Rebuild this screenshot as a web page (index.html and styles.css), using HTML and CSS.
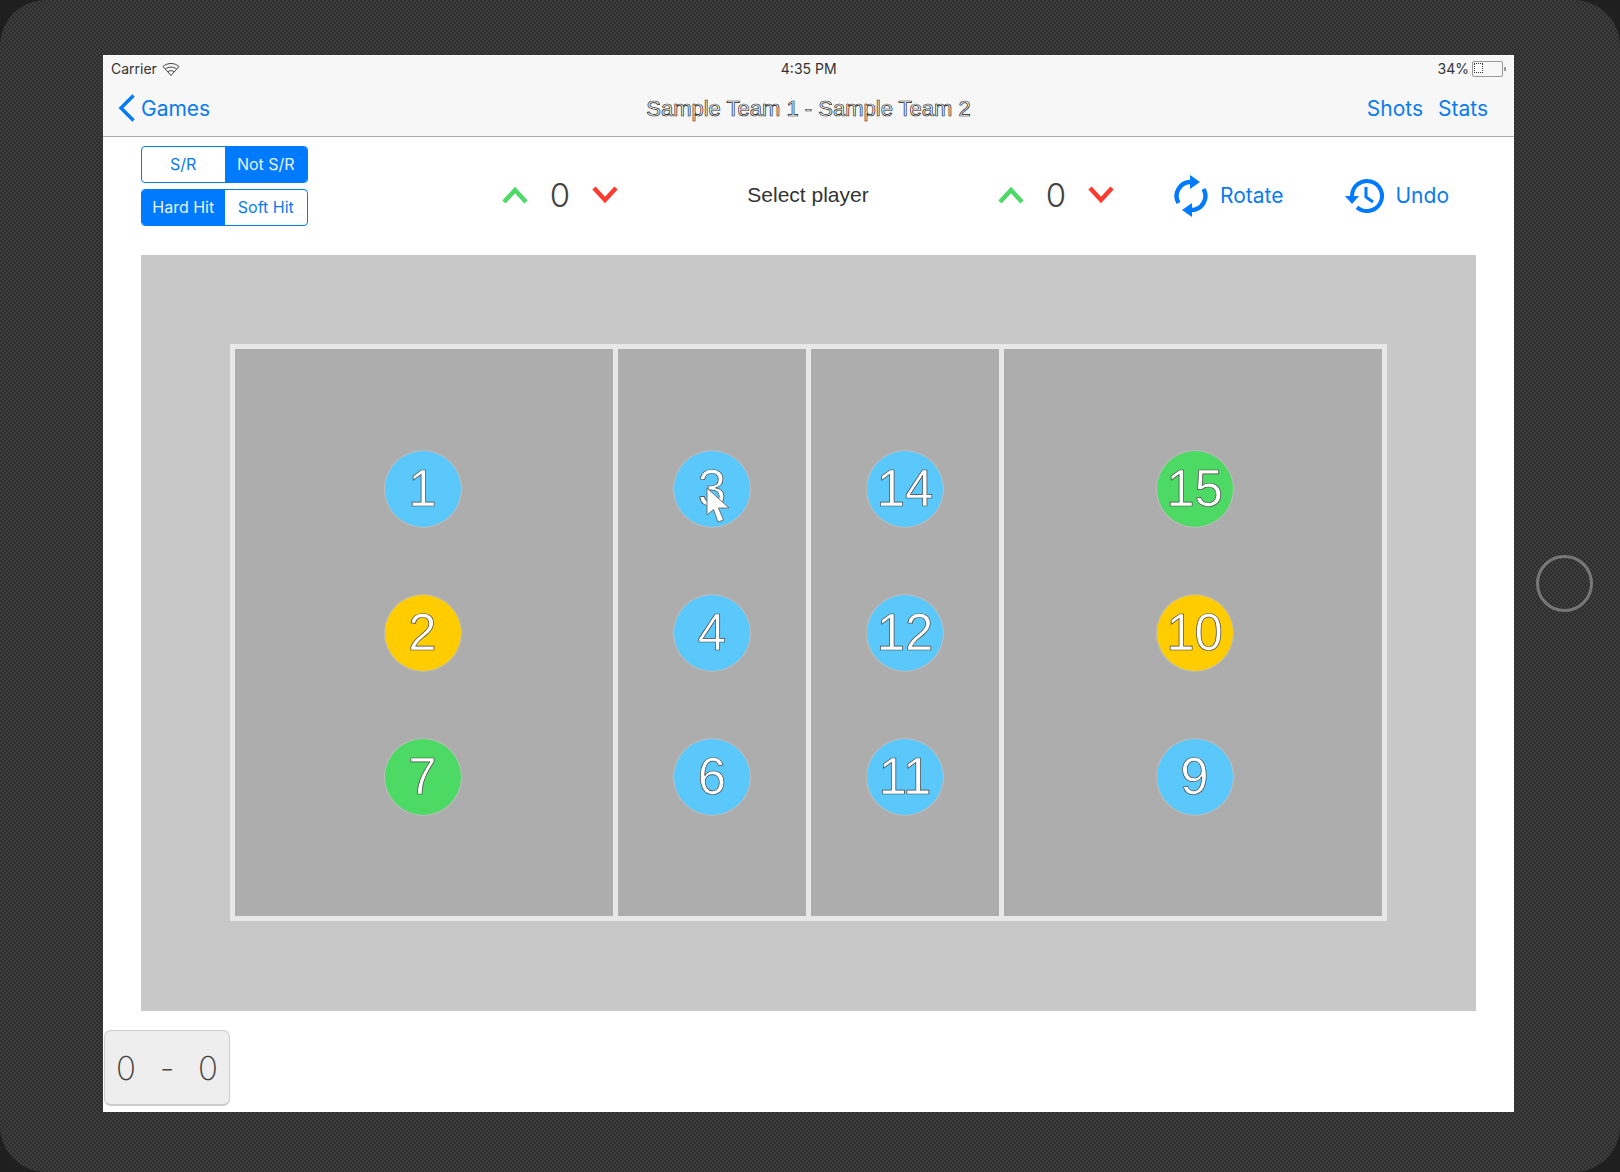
FILE: index.html
```html
<!DOCTYPE html>
<html lang="en">
<head>
    <meta charset="UTF-8">
    <title>Sample Team 1 - Sample Team 2</title>
    <link rel="stylesheet" href="styles.css">
</head>
<body>
    <div class="device">
        <div class="screen">
            <div class="status-bar">
                <div class="status-left">
                    <span>Carrier</span>
                    <svg class="wifi" width="18" height="14" viewBox="0 0 18 14" fill="none" stroke="#444" stroke-width="1">
                        <path d="M1 4.5C5.5 .5 12.5 .5 17 4.5L9 13.5Z"/>
                        <path d="M3.5 7C6.5 4.5 11.5 4.5 14.5 7"/>
                        <path d="M6 9.6C7.8 8.4 10.2 8.4 12 9.6"/>
                    </svg>
                </div>
                <span class="status-time">4:35 PM</span>
                <div class="status-right">
                    <span>34%</span>
                    <div class="battery"><div class="battery-level"></div></div>
                    <div class="battery-tip"></div>
                </div>
            </div>
            <div class="nav-bar">
                <a class="nav-back">
                    <svg width="18" height="28" viewBox="0 0 18 28" fill="none" stroke="#007aff" stroke-width="3.4">
                        <path d="M15.5 1.5L3 14L15.5 26.5"/>
                    </svg>
                    Games
                </a>
                <span class="nav-title">Sample Team 1 - Sample Team 2</span>
                <div class="nav-links">
                    <a>Shots</a>
                    <a>Stats</a>
                </div>
            </div>
            <div class="toolbar">
                <div class="seg-stack">
                    <div class="seg">
                        <div class="seg-item">S/R</div>
                        <div class="seg-item active">Not S/R</div>
                    </div>
                    <div class="seg">
                        <div class="seg-item active">Hard Hit</div>
                        <div class="seg-item">Soft Hit</div>
                    </div>
                </div>
                <div class="adjust adjust-left">
                    <svg width="26" height="18" viewBox="0 0 26 18" fill="none" stroke="#4cd964" stroke-width="4.4"><path d="M2 16L13 4L24 16"/></svg>
                    <span class="adjust-value">0</span>
                    <svg width="26" height="18" viewBox="0 0 26 18" fill="none" stroke="#ff3b30" stroke-width="4.4"><path d="M2 2L13 14L24 2"/></svg>
                </div>
                <div class="select-player">Select player</div>
                <div class="adjust">
                    <svg width="26" height="18" viewBox="0 0 26 18" fill="none" stroke="#4cd964" stroke-width="4.4"><path d="M2 16L13 4L24 16"/></svg>
                    <span class="adjust-value">0</span>
                    <svg width="26" height="18" viewBox="0 0 26 18" fill="none" stroke="#ff3b30" stroke-width="4.4"><path d="M2 2L13 14L24 2"/></svg>
                </div>
                <a class="action action-rotate">
                    <svg width="34" height="44" viewBox="0 0 34 44" fill="none" stroke="#007aff" stroke-width="4.4">
                        <path d="M4.5 29A14 14 0 0 1 17 8"/>
                        <path d="M29.5 15A14 14 0 0 1 17 36"/>
                        <path d="M16 1L26 8L16 15Z" fill="#007aff" stroke="none"/>
                        <path d="M18 43L8 36L18 29Z" fill="#007aff" stroke="none"/>
                    </svg>
                    Rotate
                </a>
                <a class="action action-undo">
                    <svg width="40" height="36" viewBox="0 0 40 36" fill="none" stroke="#007aff" stroke-width="4">
                        <path d="M7 18A15 15 0 1 1 12 29.2"/>
                        <path d="M0 18H14L7 26Z" fill="#007aff" stroke="none"/>
                        <path d="M21 9V19L28 24" stroke-width="3"/>
                    </svg>
                    Undo
                </a>
            </div>
            <div class="floor">
                <div class="court">
                    <div class="zone zone-left">
                        <div class="player blue">1</div>
                        <div class="player yellow">2</div>
                        <div class="player green">7</div>
                    </div>
                    <div class="zone">
                        <div class="player blue">3
                            <svg class="cursor" width="26" height="38" viewBox="0 0 26 38" fill="#fff" stroke="#555" stroke-width=".8">
                                <path d="M1 1V28L7.5 22.5L12 35L17.5 33L12.5 21H23Z"/>
                            </svg>
                        </div>
                        <div class="player blue">4</div>
                        <div class="player blue">6</div>
                    </div>
                    <div class="zone">
                        <div class="player blue">14</div>
                        <div class="player blue">12</div>
                        <div class="player blue">11</div>
                    </div>
                    <div class="zone zone-right">
                        <div class="player green">15</div>
                        <div class="player yellow">10</div>
                        <div class="player blue">9</div>
                    </div>
                </div>
            </div>
            <div class="score-box">
                <span>0</span>
                <span>-</span>
                <span>0</span>
            </div>
        </div>
        <div class="home-col">
            <div class="home-button"></div>
        </div>
    </div>
</body>
</html>
```

FILE: styles.css
```css
body { margin: 0; background: #1f1f1f; font-family: Inter, "Liberation Sans", sans-serif; }
.device { width: 1620px; height: 1172px; box-sizing: border-box; padding: 55px 0 59px 103px; display: flex; border-radius: 46px; background: repeating-conic-gradient(#3d3d3d 0 25%, #2e2e2e 0 50%) 0 0 / 4px 4px; }
.screen { width: 1411px; height: 1057px; background: #fff; overflow: hidden; }
.home-col { flex: 1; display: flex; align-items: center; justify-content: center; padding-right: 6px; padding-bottom: 1px; }
.home-button { width: 51px; height: 51px; border: 3px solid #777; border-radius: 50%; }

/* status bar */
.status-bar { height: 27px; padding: 0 8px; display: flex; align-items: center; justify-content: space-between; position: relative; background: #f7f7f7; font-size: 14px; color: #333; }
.status-left, .status-right { display: flex; align-items: center; gap: 5px; }
.status-right { gap: 3px; }
.status-time { font-size: 14px; color: #333; }
.battery { width: 27px; height: 12px; border: 1px solid #999; border-radius: 2px; padding: 1px; }
.battery-level { width: 7px; height: 8px; background: #fff; border: 1px dotted #333; }
.battery-tip { width: 2px; height: 4px; margin-left: -2px; background: #999; }

/* nav */
.nav-bar { height: 52px; padding: 0 15px 2px; display: grid; grid-template-columns: 1fr auto 1fr; align-items: center; background: #f7f7f7; border-bottom: 1px solid #a9a9a9; font-size: 21px; color: #0a7bf0; }
.nav-back { display: flex; align-items: center; gap: 5px; }
.nav-title { margin-top: 1px; font-family: "Liberation Sans", sans-serif; font-size: 22px; color: #fafafa; -webkit-text-stroke: .7px #222; }
.nav-links { display: flex; gap: 15px; justify-content: flex-end; margin-right: 11px; }

/* toolbar */
.toolbar { height: 118px; padding-left: 38px; display: flex; align-items: center; box-sizing: border-box; }
.seg-stack { display: flex; flex-direction: column; gap: 6px; align-self: flex-start; margin-top: 9px; }
.seg { width: 167px; height: 37px; box-sizing: border-box; padding-bottom: 0; display: flex; border: 1px solid #007aff; border-radius: 4px; overflow: hidden; font-size: 16px; color: #0a7bf0; }
.seg-item { flex: 1; padding-bottom: 2px; display: flex; align-items: center; justify-content: center; }
.seg-item.active { background: #007aff; color: #e8f2ff; }
.adjust { width: 116px; display: flex; align-items: center; justify-content: space-between; margin-top: -2px; }
.adjust-left { margin-left: 194px; }
.adjust-value { font-size: 33px; font-weight: 300; color: #444; }
.select-player { width: 380px; padding-bottom: 3px; text-align: center; font-family: "Liberation Sans", sans-serif; font-size: 21px; color: #333; }
.action { display: flex; align-items: center; font-size: 21px; color: #0a7bf0; margin-top: -1px; }
.action-rotate { gap: 12px; margin-left: 60px; }
.action-undo { gap: 10px; margin-left: 62px; }

/* court */
.floor { margin-left: 38px; width: 1335px; height: 756px; box-sizing: border-box; padding: 89px 89px 90px; background: #c8c8c8; }
.court { height: 577px; box-sizing: border-box; padding: 5px; display: grid; grid-template-columns: 378px 188px 188px 378px; gap: 5px; background: #e8e8e8; }
.zone { background: #adadad; display: flex; flex-direction: column; align-items: center; justify-content: center; gap: 68px; }
.zone-left { padding-right: 3px; }
.zone-right { padding-left: 3px; }
.player { width: 76px; height: 76px; position: relative; border-radius: 50%; display: flex; align-items: center; justify-content: center; box-shadow: 0 0 0 1px rgba(205,205,205,.5); font-family: "Liberation Sans", sans-serif; font-size: 51px; color: #fff; -webkit-text-stroke: .7px #444; }
.blue { background: #5ac8fa; }
.yellow { background: #ffcc00; }
.green { background: #4cd964; }
.cursor { position: absolute; left: 32px; top: 36px; }

/* score */
.score-box { margin: 19px 0 0 1px; width: 126px; height: 76px; box-sizing: border-box; padding: 0 11px; display: flex; align-items: center; justify-content: space-between; background: #eeeeee; border: 1px solid #ccc; border-bottom-width: 2px; border-radius: 7px; font-size: 33px; font-weight: 200; color: #444; }
```
